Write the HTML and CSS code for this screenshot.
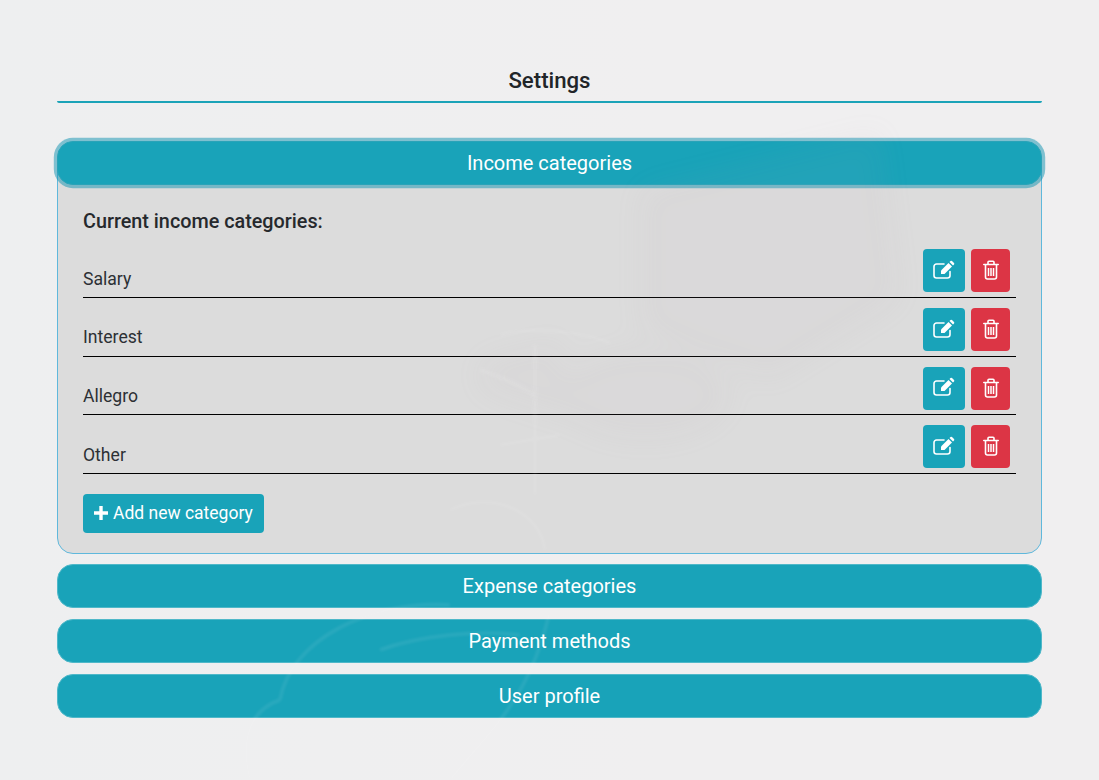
FILE: index.html
```html
<!DOCTYPE html>
<html lang="en">
<head>
<meta charset="utf-8">
<title>Settings</title>
<link rel="stylesheet" href="styles.css">
</head>
<body>
<svg class="defs" aria-hidden="true">
  <symbol id="i-edit" viewBox="0 0 22 20">
    <path class="st" d="M17 11.500v4A2.500 2.500 0 0 1 14.500 18h-11A2.500 2.500 0 0 1 1 15.500v-9A2.500 2.500 0 0 1 3.500 4H11"/>
    <path class="fl" d="M8 10.500 15.500 3 19 6.500 11.500 14H8z"/>
    <path class="fl" d="M16.500 2l1-1a1.100 1.100 0 0 1 1.500 0l2 2a1.100 1.100 0 0 1 0 1.500l-1 1z"/>
  </symbol>
  <symbol id="i-trash" viewBox="0 0 16 20">
    <path class="st" d="M.8 4.500h14.400M5 4V2.200a1 1 0 0 1 1-1h4a1 1 0 0 1 1 1V4M2.500 5v12a2 2 0 0 0 2 2h7a2 2 0 0 0 2-2V5"/>
    <path class="bars" d="M5.500 8v8M8 8v8M10.500 8v8"/>
  </symbol>
</svg>
<main class="page">
  <h1 class="title">Settings</h1>
  <section class="accordion">
    <div class="group">
      <button class="head head-open">Income categories</button>
      <div class="panel">
        <h2 class="panel-title">Current income categories:</h2>
        <div class="row"><span class="name">Salary</span><span class="actions">
          <button class="icon-btn edit"><svg class="ico-edit"><use href="#i-edit"/></svg></button>
          <button class="icon-btn del"><svg class="ico-trash"><use href="#i-trash"/></svg></button></span></div>
        <div class="row"><span class="name">Interest</span><span class="actions">
          <button class="icon-btn edit"><svg class="ico-edit"><use href="#i-edit"/></svg></button>
          <button class="icon-btn del"><svg class="ico-trash"><use href="#i-trash"/></svg></button></span></div>
        <div class="row"><span class="name">Allegro</span><span class="actions">
          <button class="icon-btn edit"><svg class="ico-edit"><use href="#i-edit"/></svg></button>
          <button class="icon-btn del"><svg class="ico-trash"><use href="#i-trash"/></svg></button></span></div>
        <div class="row"><span class="name">Other</span><span class="actions">
          <button class="icon-btn edit"><svg class="ico-edit"><use href="#i-edit"/></svg></button>
          <button class="icon-btn del"><svg class="ico-trash"><use href="#i-trash"/></svg></button></span></div>
        <button class="add"><svg viewBox="0 0 14 14" class="plus"><path d="M5.300 0h3.400v5.300H14v3.400H8.700V14H5.300V8.700H0V5.300h5.300z"/></svg>Add new category</button>
      </div>
    </div>
    <button class="head">Expense categories</button>
    <button class="head">Payment methods</button>
    <button class="head">User profile</button>
  </section>
</main>
<svg class="wash" viewBox="0 0 1099 780" aria-hidden="true">
  <defs>
    <filter id="soft" filterUnits="userSpaceOnUse" x="0" y="0" width="1099" height="780"><feGaussianBlur stdDeviation="14"/></filter>
    <filter id="soft-line" filterUnits="userSpaceOnUse" x="0" y="0" width="1099" height="780"><feGaussianBlur stdDeviation="1.500"/></filter>
  </defs>
  <g filter="url(#soft)" class="wash-dark">
    <path d="M640 190 880 130 900 300 770 380 640 330z"/>
    <ellipse cx="645" cy="395" rx="85" ry="45"/>
    <path d="M480 360 560 340 570 420 480 390z"/>
  </g>
  <g filter="url(#soft-line)" class="wash-line">
    <path d="M535 345v150M500 335c20-8 80-5 110 8M480 370c30 10 60 25 55 30M500 445l60-10"/>
    <path d="M280 700c10-60 90-100 170-95M250 780c-10-40 0-70 30-80M450 780c40-50 80-80 100-170"/>
    <path d="M450 510c40-20 90 0 95 40M380 650c40-15 100-20 140-15"/>
  </g>
</svg>
```
FILE: styles.css
```css
* { box-sizing: border-box; }
html, body { margin: 0; height: 100%; }
body {
  background: linear-gradient(90deg, #eeeff0, #f0eff0 60%);
  color: #212529;
  font-family: Roboto, "Liberation Sans", sans-serif;
}
.defs { display: block; width: 0; height: 0; }
.wash { position: fixed; inset: 0; width: 100%; height: 100%; pointer-events: none; }
.wash-dark { fill: #b9a9b4; opacity: .06; }
.wash-line { fill: none; stroke: #fff; stroke-width: 3; opacity: .09; }
.page { width: 985px; margin-left: 57px; padding-top: 66px; }
.title {
  margin: 0;
  height: 37px;
  border-bottom: 2px solid #1ba3b8;
  border-radius: 0 0 2px 2px;
  text-align: center;
  font-size: 22.200px;
  font-weight: 500;
  line-height: 29px;
}
.accordion { display: flex; flex-direction: column; gap: 11px; margin-top: 37.500px; }
.group { margin-bottom: -.2px; }
.head {
  display: block;
  width: 100%;
  height: 44px;
  padding: 1px 0 0;
  border: 1px solid #4fb8c9;
  border-radius: 16px;
  background: #19a3b9;
  color: #fff;
  font-family: inherit;
  font-size: 20px;
  line-height: 41px;
  text-align: center;
}
.head-open {
  position: relative;
  border-color: #2aa3b8;
  box-shadow: 0 0 0 3.200px rgba(23, 150, 178, .52);
}
.panel {
  margin-top: -16px;
  padding: 37px 25px 0;
  height: 385px;
  border: 1px solid #5fb8dc;
  border-radius: 0 0 16px 16px;
  background: #dcdcdc;
}
.panel-title { margin: 0 0 12.800px; font-size: 19.800px; font-weight: 500; line-height: 30px; color: #26292d; }
.row {
  display: flex;
  justify-content: space-between;
  align-items: flex-end;
  height: 48.670px;
  margin-bottom: 10px;
  padding-right: 6px;
  border-bottom: 1px solid #000;
  color: #2c3034;
  font-size: 17.600px;
  font-weight: 400;
}
.name { line-height: 36px; margin-bottom: .3px; }
.actions { display: flex; gap: 6px; margin-bottom: 4.600px; }
.icon-btn {
  display: flex;
  align-items: center;
  justify-content: center;
  height: 43px;
  padding: 0;
  border: 0;
  border-radius: 4px;
}
.edit { width: 42px; background: #19a3b9; }
.del { width: 39px; background: #dc3545; }
.ico-edit { width: 22px; height: 20px; margin-bottom: 2px; }
.ico-trash { width: 16px; height: 20px; margin-bottom: 1px; }
.st { fill: none; stroke: #fff; stroke-width: 1.600; stroke-linejoin: round; stroke-linecap: round; }
.bars { fill: none; stroke: #fff; stroke-width: 1.500; }
.fl { fill: #fff; }
.add {
  display: inline-flex;
  align-items: center;
  gap: 5px;
  height: 39px;
  margin-top: 9.900px;
  padding: 0 11px;
  border: 0;
  border-radius: 4px;
  background: #19a3b9;
  color: #fff;
  font-family: inherit;
  font-size: 17.500px;
}
.plus { width: 14px; height: 14px; fill: #fff; }
```
